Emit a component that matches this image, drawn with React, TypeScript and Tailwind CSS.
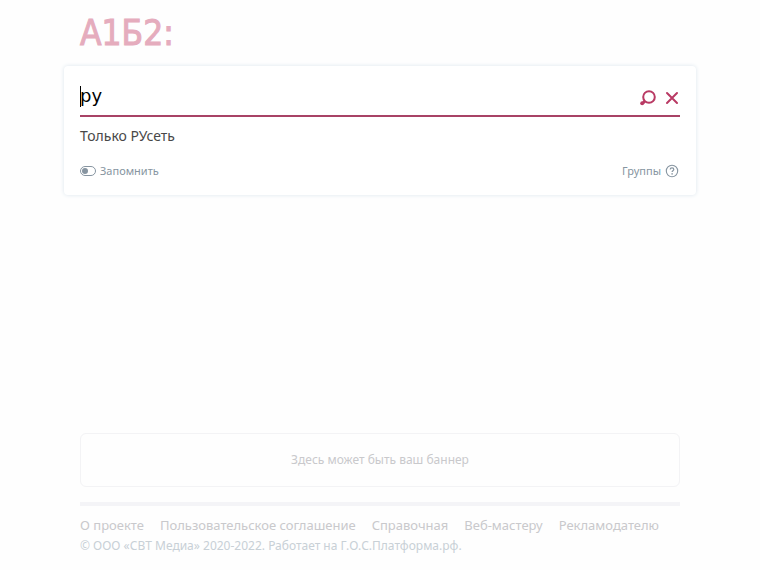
import { useState } from 'react';

const links = [
  'О проекте',
  'Пользовательское соглашение',
  'Справочная',
  'Веб-мастеру',
  'Рекламодателю',
];

function SearchIcon() {
  return (
    <svg viewBox="0 0 18 18" className="w-[18px] h-[18px]" fill="none" stroke="currentColor" aria-hidden="true">
      <circle cx="10" cy="8" r="5.8" strokeWidth="2" />
      <path d="M6 12 4 14" strokeWidth="2.6" />
      <circle cx="3.2" cy="14.3" r="2" fill="currentColor" stroke="none" />
    </svg>
  );
}

function CloseIcon() {
  return (
    <svg viewBox="0 0 14 14" className="w-[14px] h-[14px]" fill="none" stroke="currentColor" aria-hidden="true">
      <path d="M2 2l10 10M12 2L2 12" strokeWidth="2" strokeLinecap="round" />
    </svg>
  );
}

function ToggleIcon() {
  return (
    <svg viewBox="0 0 16 10" className="w-4 h-[10px]" fill="none" stroke="currentColor" aria-hidden="true">
      <rect x="0.5" y="0.5" width="15" height="9" rx="4.5" />
      <circle cx="5" cy="5" r="3" fill="currentColor" stroke="none" />
    </svg>
  );
}

function HelpIcon() {
  return (
    <svg viewBox="0 0 14 14" className="w-[14px] h-[14px]" fill="none" stroke="currentColor" aria-hidden="true">
      <circle cx="7" cy="7" r="5.7" strokeWidth="1.1" />
      <path d="M5.2 5.6C5.2 4.5 6 3.9 7 3.9s1.8.6 1.8 1.6c0 1.2-1.7 1.2-1.7 2.5" strokeWidth="1.2" />
      <circle cx="7.1" cy="9.9" r="0.8" fill="currentColor" stroke="none" />
    </svg>
  );
}

export default function App() {
  const [query, setQuery] = useState('ру');

  return (
    <div className="min-h-screen flex flex-col bg-[#fefefe] font-['Noto_Sans',sans-serif]">
      <header className="w-full max-w-[632px] mx-auto px-4 pt-[13px]">
        <h1 className="font-['DejaVu_Sans_Condensed','Noto_Sans',sans-serif] text-[35px] leading-[40px] text-[#e5acbd] [-webkit-text-stroke:1px_#e5acbd]">
          <a href="#">А1Б2:</a>
        </h1>
      </header>

      <main className="w-full max-w-[632px] mx-auto mt-[13px] flex-1">
        <form className="rounded bg-white px-4 pt-4 pb-4 shadow-[0_0_4px_#dce6ee]" onSubmit={(e) => e.preventDefault()}>
          <div className="relative flex items-center h-[35px] pb-[2px] border-b-2 border-[#a84366] text-[#b93a64]">
            <input
              type="text"
              aria-label="Поиск"
              value={query}
              onChange={(e) => setQuery(e.target.value)}
              className="flex-1 min-w-0 h-7 pb-1 font-['DejaVu_Sans',sans-serif] text-[18px] text-black bg-transparent outline-none"
            />
            <span className="absolute left-0 top-1 w-px h-[21px] bg-black" />
            <button type="submit" aria-label="Найти" className="mr-2">
              <SearchIcon />
            </button>
            <button type="button" aria-label="Очистить" onClick={() => setQuery('')} className="mr-px">
              <CloseIcon />
            </button>
          </div>
          <button type="button" className="block mt-[9px] text-[14px] leading-5 text-[#484848]">
            Только РУсеть
          </button>
          <div className="flex justify-between mt-[17px] text-[11px] leading-4 text-[#8795a1]">
            <button type="button" role="switch" aria-checked="false" className="flex items-center gap-1">
              <ToggleIcon />
              Запомнить
            </button>
            <button type="button" className="flex items-center gap-1 mr-px">
              Группы
              <HelpIcon />
            </button>
          </div>
        </form>
      </main>

      <footer className="w-full max-w-[632px] mx-auto px-4 pb-4">
        <a
          href="#"
          className="flex items-center justify-center h-[54px] rounded-md border border-[#f3f3f5] text-[12px] text-[#c9c9cc]"
        >
          Здесь может быть ваш баннер
        </a>
        <nav className="flex flex-wrap gap-x-4 mt-[15px] pt-[9px] border-t-4 border-[#f4f4f7] text-[13px] leading-5 text-[#c9c9cc]">
          {links.map((link) => (
            <a key={link} href="#">
              {link}
            </a>
          ))}
        </nav>
        <p className="mt-[3px] text-[12px] leading-4 text-[#c8d0d6]">
          © ООО «СВТ Медиа» 2020-2022. Работает на Г.О.С.Платформа.рф.
        </p>
      </footer>
    </div>
  );
}
